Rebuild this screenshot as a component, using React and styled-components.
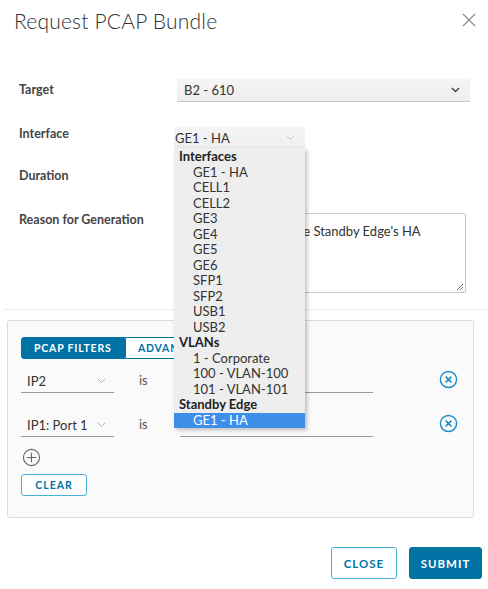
import React from "react";
import styled, { createGlobalStyle } from "styled-components";

const Global = createGlobalStyle`
  html, body { margin: 0; padding: 0; background: #fff; }
  body { font-family: Lato, "Open Sans", sans-serif; color: #333; }
`;

const Modal = styled.div`
  width: 488px;
  height: 589px;
  position: relative;
  box-sizing: border-box;
`;

const Header = styled.div`
  display: flex;
  justify-content: space-between;
  align-items: center;
  height: 40px;
  padding: 0 12px 0 14px;
`;

const Title = styled.h1`
  margin: 0;
  font-size: 21px;
  font-weight: 300;
  color: #313131;
  letter-spacing: 0.2px;
`;

const CloseX = styled.button`
  border: 0;
  background: none;
  padding: 0;
  width: 14px;
  height: 14px;
  display: flex;
  cursor: pointer;
`;

const Form = styled.div`
  display: flex;
  flex-direction: column;
  padding: 39px 18px 0 19px;
`;

const Row = styled.div`
  display: grid;
  grid-template-columns: 155px 1fr;
  align-items: ${(p) => (p.$top ? "start" : "center")};
  height: ${(p) => p.$h}px;
  margin-bottom: ${(p) => p.$mb}px;
`;

const Label = styled.label`
  font-size: 12.5px;
  font-weight: 700;
  color: #444;
  margin-top: ${(p) => p.$mt || 0}px;
`;

const Select = styled.div`
  position: relative;
  display: flex;
  align-items: center;
  justify-content: space-between;
  box-sizing: border-box;
  height: ${(p) => p.$h || 23}px;
  width: ${(p) => (p.$w ? p.$w + "px" : "auto")};
  margin-left: ${(p) => p.$ml || 0}px;
  padding: 0 10px 0 ${(p) => p.$pl || 6}px;
  background: linear-gradient(#f5f5f5, #eeeeee);
  border-bottom: 1px solid #c8c8c8;
  font-size: 13px;
  color: #333;
`;

const Chevron = ({ color = "#444", size = 9, sw = 1.6 }) => (
  <svg width={size} height={size * 0.6} viewBox="0 0 10 6">
    <path d="M1 1 L5 5 L9 1" fill="none" stroke={color} strokeWidth={sw} />
  </svg>
);

const Menu = styled.div`
  position: absolute;
  top: 100%;
  left: 0;
  width: 131px;
  background: #eeeeee;
  box-shadow: 2px 2px 4px rgba(0, 0, 0, 0.25);
  padding-top: 1px;
  z-index: 5;
`;

const Group = styled.div`
  font-weight: 700;
  font-size: 13px;
  color: #222;
  height: 15.5px;
  line-height: 15.5px;
  padding-left: 5px;
`;

const Option = styled.div`
  font-size: 13px;
  color: ${(p) => (p.$sel ? "#fff" : "#333")};
  background: ${(p) => (p.$sel ? "#3d8fea" : "transparent")};
  height: 15.5px;
  line-height: 15.5px;
  padding-left: 19px;
`;

const TextArea = styled.div`
  box-sizing: border-box;
  height: 80px;
  width: 292px;
  border: 1px solid #c8c8c8;
  border-radius: 2px;
  padding: 9px 6px 5px;
  font-size: 13px;
  color: #333;
  position: relative;
`;

const Grip = styled.svg`
  position: absolute;
  right: 1px;
  bottom: 1px;
`;

const Separator = styled.div`
  border-top: 1px solid #ececec;
  margin: 16px 0 0 4px;
`;

const Panel = styled.div`
  margin: 10px 14px 0 7px;
  height: 198px;
  box-sizing: border-box;
  background: #fafafa;
  border: 1px solid #dcdcdc;
  border-radius: 3px;
  padding: 16px 0 0 13px;
`;

const Tabs = styled.div`
  display: flex;
  height: 22px;
`;

const Tab = styled.div`
  box-sizing: border-box;
  height: 22px;
  display: flex;
  align-items: center;
  padding: 0 12px;
  font-size: 10.5px;
  font-weight: 700;
  letter-spacing: 0.8px;
  color: ${(p) => (p.$active ? "#fff" : "#0072a3")};
  background: ${(p) => (p.$active ? "#0072a3" : "#fff")};
  border: 1px solid #0072a3;
  border-radius: ${(p) => (p.$active ? "3px 0 0 3px" : "0 3px 3px 0")};
  width: ${(p) => p.$w}px;
`;

const FilterRow = styled.div`
  display: flex;
  align-items: flex-end;
  height: 27px;
  margin-top: ${(p) => p.$mt}px;
`;

const FilterSelect = styled.div`
  box-sizing: border-box;
  width: 93px;
  height: 22px;
  display: flex;
  align-items: center;
  justify-content: space-between;
  padding: 0 8px 2px 6px;
  border-bottom: 1px solid #9a9a9a;
  font-size: 13px;
  color: #333;
`;

const Is = styled.span`
  font-size: 13px;
  color: #555;
  width: 66px;
  padding-left: 25px;
  box-sizing: border-box;
  align-self: center;
  margin-top: 0;
`;

const FilterInput = styled.div`
  width: 193px;
  height: 22px;
  border-bottom: 1px solid #9a9a9a;
`;

const IconBtn = styled.button`
  border: 0;
  background: none;
  padding: 0;
  display: flex;
  margin-left: ${(p) => p.$ml || 0}px;
  align-self: ${(p) => p.$self || "auto"};
  cursor: pointer;
`;

const AddBtn = styled(IconBtn)`
  margin: 11px 0 0 1px;
`;

const OutlineButton = styled.button`
  box-sizing: border-box;
  height: ${(p) => p.$h}px;
  width: ${(p) => p.$w}px;
  border: 1px solid #49afd9;
  border-radius: 3px;
  background: #fff;
  color: #0072a3;
  font-family: Lato, sans-serif;
  font-size: ${(p) => p.$fs}px;
  font-weight: 700;
  letter-spacing: 1px;
  padding: 0;
  cursor: pointer;
`;

const ClearBtn = styled(OutlineButton)`
  margin-top: 7px;
`;

const Footer = styled.div`
  display: flex;
  justify-content: flex-end;
  gap: 12px;
  padding: 29px 6px 0 0;
`;

const PrimaryButton = styled.button`
  box-sizing: border-box;
  height: 32px;
  width: 73px;
  border: 1px solid #0072a3;
  border-radius: 3px;
  background: #0072a3;
  color: #fff;
  font-family: Lato, sans-serif;
  font-size: 11.5px;
  font-weight: 700;
  letter-spacing: 1px;
  padding: 0;
`;

const RemoveIcon = () => (
  <svg width="19" height="19" viewBox="0 0 20 20">
    <circle cx="10" cy="10" r="8.5" fill="none" stroke="#1b8dc7" strokeWidth="1.5" />
    <path d="M7 7 L13 13 M13 7 L7 13" stroke="#1b8dc7" strokeWidth="1.6" />
  </svg>
);

const AddIcon = () => (
  <svg width="19" height="19" viewBox="0 0 20 20">
    <circle cx="10" cy="10" r="8.5" fill="none" stroke="#666" strokeWidth="1.2" />
    <path d="M10 5 V15 M5 10 H15" stroke="#666" strokeWidth="1.2" />
  </svg>
);

const interfaces = ["GE1 - HA", "CELL1", "CELL2", "GE3", "GE4", "GE5", "GE6", "SFP1", "SFP2", "USB1", "USB2"];
const vlans = ["1 - Corporate", "100 - VLAN-100", "101 - VLAN-101"];

export default function App() {
  return (
    <Modal>
      <Global />
      <Header>
        <Title>Request PCAP Bundle</Title>
        <CloseX aria-label="close">
          <svg width="14" height="14" viewBox="0 0 14 14">
            <path d="M1 1 L13 13 M13 1 L1 13" stroke="#8a8a8a" strokeWidth="1.2" />
          </svg>
        </CloseX>
      </Header>
      <Form>
        <Row $h={23} $mb={25}>
          <Label $mt={-3}>Target</Label>
          <Select $ml={3} $pl={7}>
            B2 - 610
            <Chevron />
          </Select>
        </Row>
        <Row $h={22} $mb={16}>
          <Label $mt={-10}>Interface</Label>
          <Select $w={131} $h={22} $pl={1} $ml={0}>
            GE1 - HA
            <Chevron color="#c4c4c4" sw={1} />
            <Menu>
              <Group>Interfaces</Group>
              {interfaces.map((i) => (
                <Option key={i}>{i}</Option>
              ))}
              <Group>VLANs</Group>
              {vlans.map((v) => (
                <Option key={v}>{v}</Option>
              ))}
              <Group>Standby Edge</Group>
              <Option $sel>GE1 - HA</Option>
            </Menu>
          </Select>
        </Row>
        <Row $h={22} $mb={26}>
          <Label $mt={-2}>Duration</Label>
          <Select $w={120} $h={22} $pl={1}>
            5 Minutes
            <Chevron />
          </Select>
        </Row>
        <Row $h={80} $top>
          <Label $mt={-1}>Reason for Generation</Label>
          <TextArea>
            Troubleshooting of the Standby Edge's HA
            <Grip width="8" height="8" viewBox="0 0 8 8">
              <path d="M7 1 L1 7 M7 4 L4 7" stroke="#777" strokeWidth="1" />
            </Grip>
          </TextArea>
        </Row>
      </Form>
      <Separator />
      <Panel>
        <Tabs>
          <Tab $active $w={104}>PCAP FILTERS</Tab>
          <Tab $w={90}>ADVANCED</Tab>
        </Tabs>
        <FilterRow $mt={7}>
          <FilterSelect>
            IP2
            <Chevron color="#aaa" sw={1} />
          </FilterSelect>
          <Is>is</Is>
          <FilterInput />
          <IconBtn $ml={66} $self="center">
            <RemoveIcon />
          </IconBtn>
        </FilterRow>
        <FilterRow $mt={17}>
          <FilterSelect>
            IP1: Port 1
            <Chevron color="#aaa" sw={1} />
          </FilterSelect>
          <Is>is</Is>
          <FilterInput />
          <IconBtn $ml={66} $self="center">
            <RemoveIcon />
          </IconBtn>
        </FilterRow>
        <AddBtn>
          <AddIcon />
        </AddBtn>
        <ClearBtn $w={66} $h={22} $fs={10.5}>CLEAR</ClearBtn>
      </Panel>
      <Footer>
        <OutlineButton $w={66} $h={32} $fs={11.5}>CLOSE</OutlineButton>
        <PrimaryButton>SUBMIT</PrimaryButton>
      </Footer>
    </Modal>
  );
}
